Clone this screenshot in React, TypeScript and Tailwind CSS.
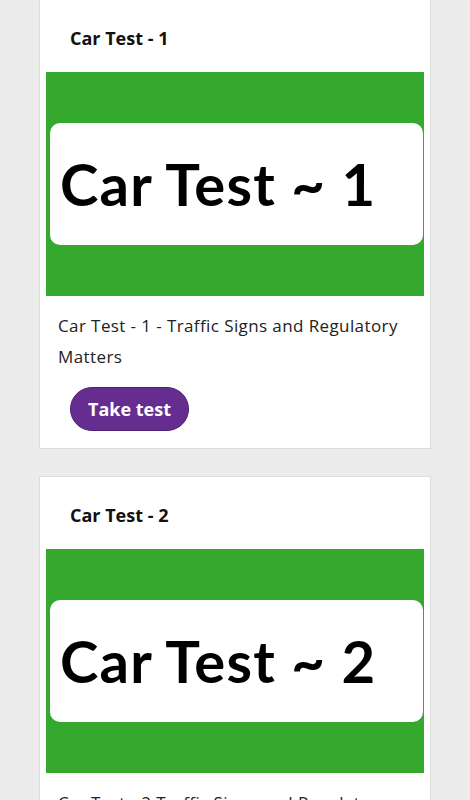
import React from 'react';

const TESTS = [
  { id: 1, title: 'Car Test - 1', description: 'Car Test - 1 - Traffic Signs and Regulatory Matters' },
  { id: 2, title: 'Car Test - 2', description: 'Car Test - 2 Traffic Signs and Regulatory Matters' },
];

const Banner: React.FC<{ n: number }> = ({ n }) => (
  <div className="h-[224px] bg-[#35a82e] flex items-center pl-[4px] pr-[1px]">
    <div className="w-full h-[122px] bg-white rounded-[10px] flex items-center pl-[10px]">
      <span
        className="text-[58px] font-bold text-black leading-none whitespace-nowrap tracking-[1.2px]"
        style={{ fontFamily: 'Lato, sans-serif' }}
      >
        Car Test ~ {n}
      </span>
    </div>
  </div>
);

export default function App() {
  return (
    <div className="min-h-screen bg-[#ececec] px-[39px] flex flex-col gap-[27px] overflow-hidden" style={{ fontFamily: '"Open Sans", sans-serif' }}>
      {TESTS.map((t) => (
        <div key={t.id} className={`bg-white border border-[#dcdcdc] pb-[17px] ${t.id === 1 ? '-mt-[1px]' : ''}`}>
          <h3 className="px-[30px] pt-[26px] pb-[22px] text-[18px] font-bold text-[#111] leading-6">{t.title}</h3>
          <div className="px-[6px]">
            <Banner n={t.id} />
          </div>
          <p className="px-[18px] pt-[14px] text-[17px] text-[#222] leading-[31px] tracking-[0.4px]">{t.description}</p>
          <div className="px-[30px] pt-[15px]">
            <button className="h-[44px] px-[17px] rounded-full bg-[#662d91] border border-[#4d1f73] text-white text-[18px] font-bold">
              Take test
            </button>
          </div>
        </div>
      ))}
    </div>
  );
}
